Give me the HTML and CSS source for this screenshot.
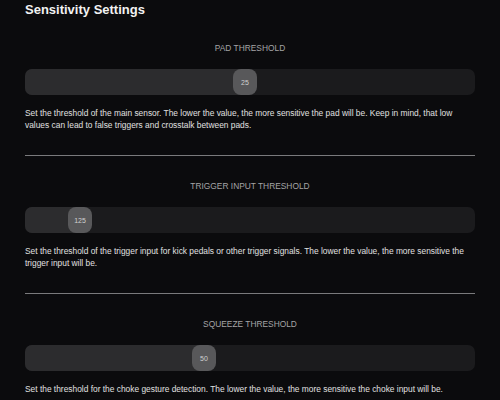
FILE: index.html
```html
<!DOCTYPE html>
<html>
<head>
<meta charset="utf-8">
<link rel="stylesheet" href="styles.css">
</head>
<body>
<div class="page">
  <h1 class="title">Sensitivity Settings</h1>
  <section class="setting">
    <div class="label">PAD THRESHOLD</div>
    <div class="slider">
      <div class="fill" style="width: 220px"></div>
      <div class="thumb">25</div>
    </div>
    <p class="desc">Set the threshold of the main sensor. The lower the value, the more sensitive the pad will be. Keep in mind, that low values can lead to false triggers and crosstalk between pads.</p>
  </section>
  <hr class="divider">
  <section class="setting">
    <div class="label">TRIGGER INPUT THRESHOLD</div>
    <div class="slider">
      <div class="fill" style="width: 55px"></div>
      <div class="thumb">125</div>
    </div>
    <p class="desc">Set the threshold of the trigger input for kick pedals or other trigger signals. The lower the value, the more sensitive the trigger input will be.</p>
  </section>
  <hr class="divider">
  <section class="setting">
    <div class="label">SQUEEZE THRESHOLD</div>
    <div class="slider">
      <div class="fill" style="width: 179px"></div>
      <div class="thumb">50</div>
    </div>
    <p class="desc">Set the threshold for the choke gesture detection. The lower the value, the more sensitive the choke input will be.</p>
  </section>
</div>
</body>
</html>
```

FILE: styles.css
```css
html, body {
  margin: 0;
  padding: 0;
  background: #0b0b0d;
}
body {
  font-family: "Liberation Sans", Arial, sans-serif;
  color: #e6e6e6;
}
.page {
  padding: 2px 25px 0 25px;
}
.title {
  margin: 0;
  font-size: 13px;
  font-weight: bold;
  line-height: 16px;
  color: #f2f2f2;
}
.setting {
  display: flex;
  flex-direction: column;
}
.label {
  text-align: center;
  font-size: 8.4px;
  line-height: 12px;
  color: #a4a4a6;
  margin-top: 24px;
  margin-bottom: 15px;
}
.slider {
  position: relative;
  height: 26px;
  background: #1b1b1d;
  border-radius: 7px;
  display: flex;
  align-items: stretch;
}
.fill {
  background: #2c2c2e;
  border-radius: 7px 0 0 7px;
}
.thumb {
  width: 24px;
  margin-left: -12px;
  background: #58585a;
  border-radius: 8px;
  font-size: 7px;
  color: #d0d0d0;
  display: flex;
  align-items: center;
  justify-content: center;
}
.desc {
  margin: 12px 0 0 0;
  font-size: 8.4px;
  line-height: 12px;
  color: #e0e0e0;
}
.divider {
  border: none;
  height: 1px;
  background: #7a7a7c;
  margin: 24px 0 0 0;
}
```
